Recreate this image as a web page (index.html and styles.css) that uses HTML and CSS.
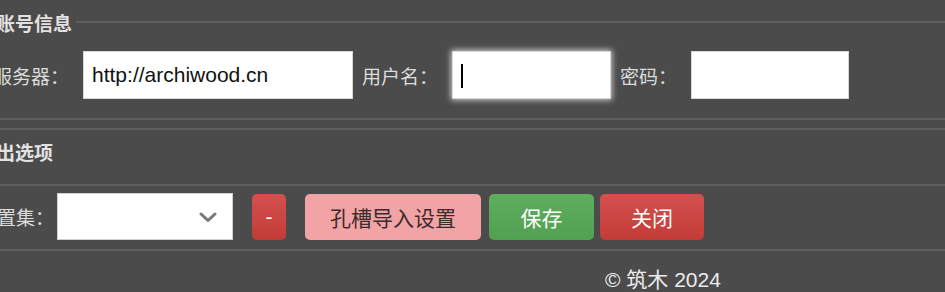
FILE: index.html
```html
<!DOCTYPE html>
<html lang="zh-CN">
<head>
    <meta charset="UTF-8">
    <title>孔槽导入设置</title>
    <link rel="stylesheet" href="styles.css">
</head>
<body>

<div class="page">
    <!-- 账号信息 -->
    <section class="group account">
        <div class="group-title"><span>账号信息</span></div>
        <div class="row">
            <label class="field-label">服务器：</label>
            <input class="text-input server" type="text" value="http://archiwood.cn">
            <label class="field-label">用户名：</label>
            <span class="focus-wrap"><input class="text-input user" type="text"></span>
            <label class="field-label">密码：</label>
            <input class="text-input pass" type="password">
        </div>
    </section>

    <!-- 导出选项 -->
    <section class="group options">
        <h3 class="options-title">导出选项</h3>
        <div class="row">
            <label class="field-label short">配置集：</label>
            <div class="select-box">
                <svg class="chevron" width="18" height="11" viewBox="0 0 18 11">
                    <path d="M2 2 L9 8.5 L16 2" fill="none" stroke="#777" stroke-width="3" stroke-linecap="round" stroke-linejoin="round"/>
                </svg>
            </div>
            <button class="btn btn-red btn-minus">-</button>
            <button class="btn btn-pink">孔槽导入设置</button>
            <button class="btn btn-green">保存</button>
            <button class="btn btn-red btn-close">关闭</button>
        </div>
    </section>

    <footer class="footer">© 筑木 2024</footer>
</div>

</body>
</html>
```

FILE: styles.css
```css
body {
    margin: 0;
    padding: 0;
    background-color: #4b4b4b;
    color: #dedede;
    font-family: "Liberation Sans", "Noto Sans CJK SC", sans-serif;
    overflow: hidden;
}

/* page is scrolled a little to the right, left edge is cut */
.page {
    margin-left: -30px;
    width: 1000px;
}

.group-title {
    display: flex;
    align-items: center;
    height: 44px;
    padding-left: 26px;
    font-size: 19px;
    font-weight: bold;
    color: #e2e2e2;
}

.group-title::after {
    content: "";
    flex: 1;
    height: 2px;
    margin-left: 4px;
    background-color: #5f5f5f;
}

.row {
    display: flex;
    align-items: center;
}

.account .row {
    padding: 7px 0 19px 23px;
    border-bottom: 2px solid #5f5f5f;
}

.field-label {
    font-size: 19px;
    color: #dcdcdc;
    margin-right: 14px;
}

.text-input {
    box-sizing: border-box;
    height: 48px;
    border: 1px solid #d8d8d8;
    background-color: #fff;
    padding: 0 8px;
    font-family: "Liberation Sans", Arial, sans-serif;
    font-size: 21px;
    color: #111;
    margin-right: 9px;
    outline: none;
}

.server { width: 270px; }
.user { width: 159px; margin-right: 0; box-shadow: 0 0 6px 1px rgba(255,255,255,0.75); }
.pass { width: 158px; }

.focus-wrap {
    position: relative;
    display: inline-block;
    margin-right: 9px;
    height: 48px;
}

.focus-wrap::after {
    content: "";
    position: absolute;
    left: 9px;
    top: 13px;
    width: 2px;
    height: 24px;
    background-color: #000;
}

.options {
    margin-top: 8px;
    border-top: 2px solid #5f5f5f;
}

.options-title {
    margin: 0;
    padding: 0 0 6px 7px;
    line-height: 48px;
    font-size: 19px;
    font-weight: bold;
    color: #e2e2e2;
    border-bottom: 2px solid #5f5f5f;
}

.options .row {
    padding: 7px 0 9px 8px;
    border-bottom: 2px solid #5f5f5f;
}

.field-label.short {
    margin-right: 3px;
}

.select-box {
    box-sizing: border-box;
    position: relative;
    width: 176px;
    height: 47px;
    background-color: #fff;
    border: 1px solid #d0d0d0;
    margin-right: 19px;
}

.chevron {
    position: absolute;
    right: 15px;
    top: 18px;
}

.btn {
    height: 46px;
    border: none;
    border-radius: 5px;
    font-family: "Liberation Sans", "Noto Sans CJK SC", sans-serif;
    font-size: 21px;
    color: #fff;
    cursor: pointer;
    padding: 0;
}

.btn-red {
    background: linear-gradient(#d4514d, #c33b37);
}

.btn-minus {
    width: 34px;
    margin-right: 19px;
}

.btn-pink {
    width: 176px;
    margin-right: 8px;
    background-color: #f2a3a6;
    color: #3b2b2b;
}

.btn-green {
    width: 105px;
    margin-right: 6px;
    background: linear-gradient(#5fae5f, #52a052);
}

.btn-close {
    width: 104px;
}

.footer {
    padding-left: 635px;
    line-height: 58px;
    font-size: 21px;
    color: #ececec;
}
```
